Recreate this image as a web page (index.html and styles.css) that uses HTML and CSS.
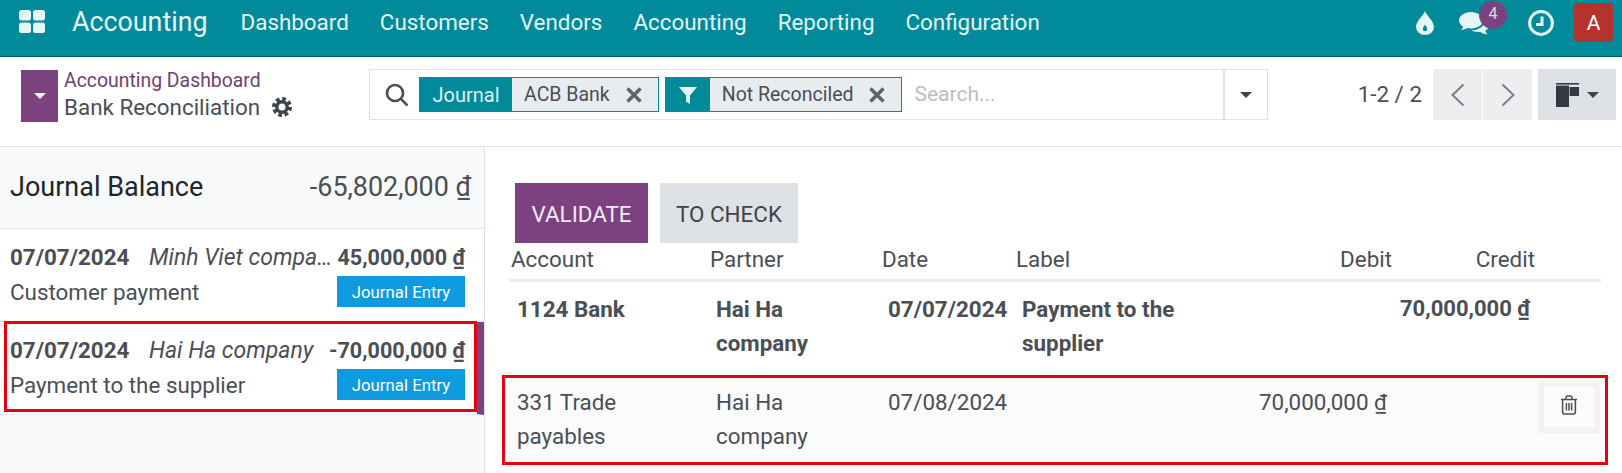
FILE: index.html
```html
<!DOCTYPE html>
<html lang="en">
  <head>
    <meta charset="UTF-8" />
    <title>Bank Reconciliation</title>
    <link rel="stylesheet" href="styles.css">
  </head>
  <body>
    <header class="navbar">
      <svg class="apps-icon" viewBox="0 0 26 23" width="26" height="23">
        <rect x="0" y="0" width="12" height="10.5" rx="2.5" />
        <rect x="14" y="0" width="12" height="10.5" rx="2.5" />
        <rect x="0" y="12.5" width="12" height="10.5" rx="2.5" />
        <rect x="14" y="12.5" width="12" height="10.5" rx="2.5" />
      </svg>
      <span class="brand">Accounting</span>
      <nav class="menu">
        <a>Dashboard</a>
        <a>Customers</a>
        <a>Vendors</a>
        <a>Accounting</a>
        <a>Reporting</a>
        <a>Configuration</a>
      </nav>
      <div class="systray">
        <svg class="tray-drop" viewBox="0 0 18 24" width="18" height="24">
          <path fill-rule="evenodd" d="M9 0C10 4 18 10 18 16A9 8 0 0 1 0 16C0 10 8 4 9 0ZM9 13.5C8 15.5 6.8 16.5 6.8 18A2.2 2.2 0 0 0 11.2 18C11.2 16.5 10 15.5 9 13.5Z" />
        </svg>
        <span class="tray-chat">
          <svg viewBox="0 0 30 24" width="30" height="24">
            <path d="M12 1C5.5 1 0 4.8 0 9.5C0 12.2 1.7 14.2 4 15.7C3.7 17 2.8 18.2 1.8 19C4.6 18.8 6.8 18 8.4 17C9.5 17.3 10.7 17.5 12 17.5C18.6 17.5 24 13.8 24 9.5C24 4.8 18.6 1 12 1Z" />
            <path d="M26 9C26.2 14.5 20.5 19.3 12.5 19.6C14.3 20.6 16.4 21 18.5 21C19.5 21 20.4 20.9 21.2 20.7C22.7 22 25 23 28.5 23.2C27.4 22.3 26.6 21 26.3 19.6C28.6 18.2 30 16.3 30 14.2C30 12.1 28.4 10.2 26 9Z" />
          </svg>
          <span class="badge">4</span>
        </span>
        <svg class="tray-clock" viewBox="0 0 26 26" width="26" height="26">
          <circle cx="13" cy="13" r="11.4" />
          <path d="M14 6.5V14.5H8" />
        </svg>
        <span class="avatar">A</span>
      </div>
    </header>

    <section class="control-panel">
      <div class="crumbs">
        <span class="crumb-toggle"><i class="caret caret-white"></i></span>
        <div class="crumb-text">
          <a class="crumb-link">Accounting Dashboard</a>
          <div class="crumb-current">
            Bank Reconciliation
            <svg class="gear" viewBox="0 0 20 20" width="20" height="20">
              <circle cx="10" cy="10" r="8" class="gear-teeth" />
              <circle cx="10" cy="10" r="5.2" class="gear-ring" />
            </svg>
          </div>
        </div>
      </div>

      <div class="search">
        <svg class="search-icon" viewBox="0 0 24 24" width="24" height="24">
          <circle cx="10" cy="10" r="8" />
          <path d="M15.8 15.8L22.5 22.5" />
        </svg>
        <div class="facet">
          <span class="facet-label">Journal</span>
          <span class="facet-value">ACB Bank
            <svg class="facet-x" viewBox="0 0 16 16" width="16" height="16"><path d="M1.5 1.5L14.5 14.5M14.5 1.5L1.5 14.5" /></svg>
          </span>
        </div>
        <div class="facet">
          <span class="facet-label facet-filter">
            <svg viewBox="0 0 18 18" width="18" height="18"><path d="M0 1H18L11 9.5V18L7 15.5V9.5Z" /></svg>
          </span>
          <span class="facet-value">Not Reconciled
            <svg class="facet-x" viewBox="0 0 16 16" width="16" height="16"><path d="M1.5 1.5L14.5 14.5M14.5 1.5L1.5 14.5" /></svg>
          </span>
        </div>
        <span class="search-placeholder">Search...</span>
        <span class="search-more"><i class="caret"></i></span>
      </div>

      <span class="pager-value">1-2 / 2</span>
      <div class="pager">
        <button class="pager-btn">
          <svg viewBox="0 0 14 24" width="14" height="24"><path d="M12.5 1.5L1.5 12L12.5 22.5" /></svg>
        </button>
        <button class="pager-btn">
          <svg viewBox="0 0 14 24" width="14" height="24"><path d="M1.5 1.5L12.5 12L1.5 22.5" /></svg>
        </button>
      </div>
      <button class="view-btn">
        <svg viewBox="0 0 23 24" width="23" height="24">
          <rect x="0" y="0" width="23" height="1.6" />
          <rect x="0" y="2.6" width="13" height="21.4" />
          <rect x="13.6" y="4" width="9.4" height="9" />
        </svg>
        <i class="caret"></i>
      </button>
    </section>

    <main class="content">
      <aside class="lines">
        <div class="balance">
          <span class="balance-title">Journal Balance</span>
          <span class="balance-value">-65,802,000 <u>₫</u></span>
        </div>
        <div class="statement">
          <div class="statement-top">
            <b class="statement-date">07/07/2024</b>
            <em class="statement-partner">Minh Viet company</em>
            <b class="statement-amount">45,000,000 <u>₫</u></b>
          </div>
          <div class="statement-bottom">
            <span>Customer payment</span>
            <a class="entry-btn">Journal Entry</a>
          </div>
        </div>
        <div class="statement statement-active">
          <div class="statement-top">
            <b class="statement-date">07/07/2024</b>
            <em class="statement-partner">Hai Ha company</em>
            <b class="statement-amount">-70,000,000 <u>₫</u></b>
          </div>
          <div class="statement-bottom">
            <span>Payment to the supplier</span>
            <a class="entry-btn">Journal Entry</a>
          </div>
        </div>
      </aside>

      <section class="details">
        <div class="actions">
          <button class="btn btn-primary">VALIDATE</button>
          <button class="btn btn-secondary">TO CHECK</button>
        </div>
        <div class="move-head">
          <span>Account</span>
          <span>Partner</span>
          <span>Date</span>
          <span>Label</span>
          <span class="num">Debit</span>
          <span class="num">Credit</span>
        </div>
        <div class="move-line move-bold">
          <span>1124 Bank</span>
          <span>Hai Ha company</span>
          <span>07/07/2024</span>
          <span>Payment to the supplier</span>
          <span class="num"></span>
          <span class="num">70,000,000 <u>₫</u></span>
        </div>
        <div class="move-line move-marked">
          <span>331 Trade payables</span>
          <span>Hai Ha company</span>
          <span>07/08/2024</span>
          <span></span>
          <span class="num">70,000,000 <u>₫</u></span>
          <span class="num"></span>
          <span class="trash">
            <svg viewBox="0 0 18 20" width="18" height="20">
              <path d="M1 4.5H17M6 4.5V2.6C6 1.6 6.6 1 7.6 1H10.4C11.4 1 12 1.6 12 2.6V4.5M2.6 4.5V17C2.6 18.2 3.4 19 4.6 19H13.4C14.6 19 15.4 18.2 15.4 17V4.5M6.4 8V15.5M9 8V15.5M11.6 8V15.5" />
            </svg>
          </span>
        </div>
      </section>
    </main>
  </body>
</html>
```

FILE: styles.css
```css
*,
*::after {
  box-sizing: border-box;
}
body {
  margin: 0;
  height: 100vh;
  overflow: hidden;
  display: flex;
  flex-direction: column;
  background: white;
  color: #4a4f55;
  font-family: "Roboto", sans-serif;
  font-size: 22.4px;
}
u {
  text-underline-offset: 2px;
}
button {
  border: none;
  font-family: inherit;
  padding: 0;
}

/* top bar */
.navbar {
  flex: none;
  height: 57px;
  display: flex;
  align-items: center;
  background: #018a9a;
  border-bottom: 1px solid #015b66;
  color: #e6f6f7;
  padding: 0 9px 13px 19px;
}
.apps-icon {
  fill: #e6f6f7;
  margin-right: 27px;
  margin-top: -1px;
}
.brand {
  font-size: 26.8px;
  margin-right: 33px;
}
.menu {
  display: flex;
  gap: 31px;
}
.systray {
  margin-left: auto;
  display: flex;
  align-items: center;
  margin-top: 2px;
}
.tray-drop {
  fill: #e6f6f7;
  margin-right: 25px;
}
.tray-chat {
  position: relative;
  display: flex;
  margin-right: 39px;
}
.tray-chat svg {
  fill: #e6f6f7;
}
.badge {
  position: absolute;
  left: 20px;
  top: -10px;
  width: 28px;
  height: 28px;
  border-radius: 50%;
  background: #7c4280;
  color: #e6dbe8;
  font-size: 16px;
  text-align: center;
  line-height: 25px;
}
.tray-clock {
  fill: none;
  stroke: #e6f6f7;
  stroke-width: 3;
  margin-right: 20px;
}
.avatar {
  width: 39px;
  height: 39px;
  border-radius: 4px;
  background: #b5332e;
  color: white;
  font-size: 21px;
  display: flex;
  align-items: center;
  justify-content: center;
}

/* control panel */
.control-panel {
  flex: none;
  height: 90px;
  display: flex;
  align-items: flex-start;
  padding: 12px 6px 0 21px;
  border-bottom: 1px solid #dee2e6;
}
.crumbs {
  display: flex;
  width: 348px;
  height: 52px;
  margin-top: 1px;
}
.crumb-toggle {
  width: 37px;
  background: #7c4280;
  display: flex;
  align-items: center;
  justify-content: center;
  margin-right: 6px;
}
.caret {
  display: inline-block;
  width: 0;
  height: 0;
  border-left: 6.5px solid transparent;
  border-right: 6.5px solid transparent;
  border-top: 6.5px solid #3f444a;
}
.caret-white {
  border-top-color: white;
}
.crumb-link {
  display: block;
  color: #71426f;
  font-size: 19.4px;
  line-height: 21px;
}
.crumb-current {
  display: flex;
  align-items: center;
  line-height: 32px;
  white-space: nowrap;
}
.gear {
  margin-left: 12px;
}
.gear-teeth {
  fill: none;
  stroke: #3f444a;
  stroke-width: 4;
  stroke-dasharray: 3.6 2.68;
}
.gear-ring {
  fill: none;
  stroke: #3f444a;
  stroke-width: 3.4;
}
.search {
  width: 899px;
  height: 51px;
  display: flex;
  align-items: center;
  border: 1px solid #dee2e6;
  padding-left: 15px;
}
.search-icon {
  flex: none;
  fill: none;
  stroke: #4a4f55;
  stroke-width: 2.6;
  margin-right: 10px;
}
.facet {
  display: flex;
  height: 35px;
  border: 1px solid #018a9a;
  margin-right: 6px;
  font-size: 19.5px;
}
.facet-label {
  display: flex;
  align-items: center;
  background: #018a9a;
  color: #dff2f4;
  font-size: 20px;
  padding: 0 12.5px;
}
.facet-filter {
  padding: 0 13px;
}
.facet-filter svg {
  fill: #e6f6f7;
}
.facet-value {
  display: flex;
  align-items: center;
  background: #e9ecef;
  padding: 0 16px 0 12px;
}
.facet-x {
  fill: none;
  stroke: #5f6469;
  stroke-width: 3.5;
  margin-left: 16px;
}
.search-placeholder {
  flex: 1;
  color: #b9bec3;
  font-size: 21px;
  padding: 0 0 2px 6px;
}
.search-more {
  width: 44px;
  height: 100%;
  display: flex;
  align-items: center;
  justify-content: center;
  border-left: 2px solid #dee2e6;
}
.pager-value {
  margin-left: auto;
  margin-right: 11px;
  line-height: 51px;
}
.pager {
  display: flex;
  gap: 1px;
}
.pager-btn {
  width: 49px;
  height: 51px;
  background: #eceef0;
  display: flex;
  align-items: center;
  justify-content: center;
}
.pager-btn svg {
  fill: none;
  stroke: #7b7f83;
  stroke-width: 2;
}
.view-btn {
  width: 78px;
  height: 51px;
  margin-left: 6px;
  background: #dee1e5;
  display: flex;
  align-items: center;
  justify-content: center;
  gap: 8px;
}
.view-btn svg {
  fill: #343a40;
}

/* main area */
.content {
  flex: 1;
  display: flex;
  min-height: 0;
}
.lines {
  flex: none;
  width: 485px;
  background: #f8f9fa;
  border-right: 1px solid #dee2e6;
}
.balance {
  height: 82px;
  display: flex;
  justify-content: space-between;
  align-items: center;
  padding: 0 13px 1px 10px;
  border-bottom: 1px solid #e3e6e9;
}
.balance-title {
  font-size: 27px;
  color: #212529;
}
.balance-value {
  font-size: 26.9px;
}
.statement {
  position: relative;
  height: 93px;
  background: white;
  padding: 12px 19px 0 10px;
  border-bottom: 1px solid #e3e6e9;
}
.statement-active {
  border-right: 7px solid #7c4280;
  padding-right: 12px;
}
.statement-active::after {
  content: "";
  position: absolute;
  left: 4px;
  top: -1px;
  width: 473px;
  height: 91px;
  border: 3px solid #e8000f;
}
.statement-top {
  display: flex;
  align-items: baseline;
  white-space: nowrap;
  line-height: 33px;
}
.statement-date {
  flex: none;
  width: 139px;
}
.statement-partner {
  flex: 1;
  min-width: 0;
  font-size: 23px;
  overflow: hidden;
  text-overflow: ellipsis;
}
.statement-amount {
  flex: none;
  font-size: 21.6px;
  margin-left: 4px;
}
.statement-bottom {
  display: flex;
  justify-content: space-between;
  align-items: center;
  margin-top: 2px;
}
.entry-btn {
  width: 128px;
  height: 31px;
  background: #0d9ade;
  color: white;
  font-size: 16.8px;
  display: flex;
  align-items: center;
  justify-content: center;
}
.details {
  flex: 1;
  padding: 36px 21px 0 24px;
}
.actions {
  display: flex;
  gap: 12px;
  padding-left: 6px;
}
.btn {
  height: 60px;
  font-size: 22.4px;
  padding: 2px 0 0;
}
.btn-primary {
  width: 133px;
  background: #7c4280;
  color: #f3e9f4;
}
.btn-secondary {
  width: 138px;
  background: #dee2e6;
  color: #3f444a;
}
.move-head,
.move-line {
  display: grid;
  grid-template-columns: 198px 172px 134px 188px 196px 143px 61px;
}
.move-head {
  height: 39px;
  align-items: center;
  border-bottom: 3px solid #e9ecef;
  padding-bottom: 4px;
}
.move-head span {
  padding: 0 5px 0 3px;
}
.move-head span:first-child {
  padding-left: 2px;
}
.move-line {
  position: relative;
  line-height: 34px;
  height: 93px;
  padding-top: 10px;
}
.move-line > span {
  padding: 0 10px 0 9px;
}
.move-line > span:first-child {
  padding-left: 8px;
}
.move-bold {
  font-weight: 700;
}
.move-bold > .num {
  font-size: 22px;
  padding-left: 0;
}
.num {
  text-align: right;
  white-space: nowrap;
}
.move-marked {
  background: #fbfbfb;
  height: 90px;
  padding-top: 10px;
}
.move-marked::after {
  content: "";
  position: absolute;
  left: -7px;
  right: -7px;
  top: 0;
  bottom: 0;
  border: 3px solid #e8000f;
  pointer-events: none;
}
.move-marked > .trash {
  grid-column: 7;
  width: 62px;
  height: 52px;
  margin-top: -4px;
  margin-left: -2px;
  padding: 0 0 4px;
  background: #fcfcfc;
  border: 6px solid #f3f3f6;
  display: flex;
  align-items: center;
  justify-content: center;
}
.trash svg {
  fill: none;
  stroke: #4a4f55;
  stroke-width: 1.5;
}
```
